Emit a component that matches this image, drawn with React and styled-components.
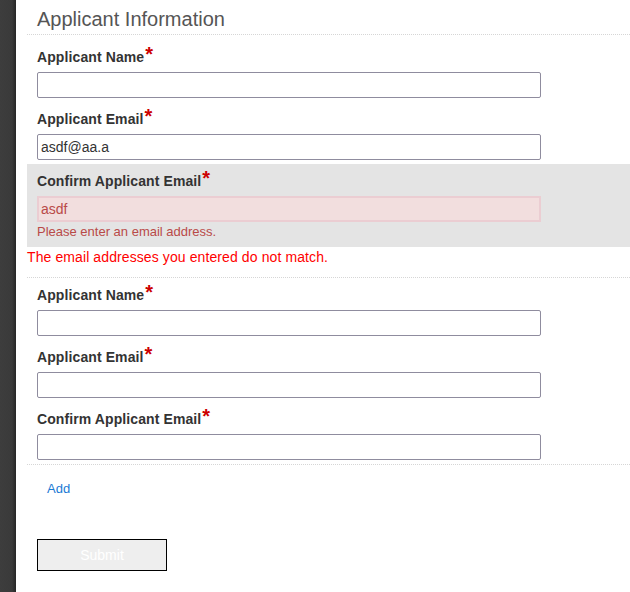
import React, { useState } from 'react';
import styled, { createGlobalStyle } from 'styled-components';

const GlobalStyle = createGlobalStyle`
html, body {
  margin: 0;
  padding: 0;
  background: #fff;
}
body {
  font-family: "Liberation Sans", Arial, sans-serif;
}
`;

const Page = styled.div`
display: flex;
min-height: 100vh;
`;

const SideBar = styled.div`
width: 16px;
flex-shrink: 0;
background: linear-gradient(to right, #3d3d3d 0, #3a3a3a 12px, #262626 16px);
`;

const Main = styled.div`
flex: 1;
padding-left: 11px;
`;

const Title = styled.h2`
margin: 0;
padding: 7px 10px 3px;
font-size: 20px;
line-height: 24px;
font-weight: normal;
color: #555;
border-bottom: 1px dotted #d6d6d6;
`;

const Group = styled.div`
padding-top: ${(p) => p.$top || 0}px;
border-bottom: 1px dotted #d6d6d6;
`;

const Field = styled.div`
padding: 7px 10px ${(p) => (p.$error ? 7 : 4)}px;
background: ${(p) => (p.$error ? '#e4e4e4' : 'transparent')};
`;

const Label = styled.label`
display: block;
font-size: 14px;
line-height: 20px;
font-weight: bold;
letter-spacing: 0.1px;
color: #333;
margin-bottom: 5px;
`;

const Star = styled.span`
color: #cc0000;
font-size: 20px;
line-height: 0;
vertical-align: 1px;
margin-left: 1px;
`;

const Input = styled.input`
display: block;
box-sizing: border-box;
width: 504px;
height: 26px;
margin: 0;
padding: 0 ${(p) => (p.$error ? 2 : 3)}px;
font-family: "Liberation Sans", Arial, sans-serif;
font-size: 14px;
color: ${(p) => (p.$error ? '#b94a48' : '#333')};
background: ${(p) => (p.$error ? '#f2dede' : '#fff')};
border: ${(p) => (p.$error ? '2px solid #ebcdd2' : '1px solid #8f8c9e')};
border-radius: ${(p) => (p.$error ? 0 : 2)}px;
outline: none;
`;

const FieldError = styled.div`
margin-top: 2px;
font-size: 13px;
line-height: 16px;
color: #b94a48;
`;

const Mismatch = styled.div`
font-size: 14px;
line-height: 20px;
letter-spacing: 0.1px;
color: #ff0000;
margin-bottom: 10px;
`;

const AddLink = styled.a`
display: inline-block;
margin: 14px 0 0 20px;
font-size: 13px;
line-height: 20px;
color: #1a7ad4;
text-decoration: none;
cursor: pointer;
`;

const Actions = styled.div`
padding: 40px 10px 0;
`;

const SubmitButton = styled.button`
width: 130px;
height: 32px;
background: #eeeeee;
border: 1px solid #000;
color: #fff;
font-family: "Liberation Sans", Arial, sans-serif;
font-size: 14px;
padding: 0;
`;

const FormField = ({ label, value, error, onChange }) => (
  <Field $error={!!error}>
    <Label>
      {label}
      <Star>*</Star>
    </Label>
    <Input
      type="text"
      $error={!!error}
      value={value}
      onChange={(e) => onChange(e.target.value)}
    />
    {error && <FieldError>{error}</FieldError>}
  </Field>
);

const App = () => {
  const [applicants, setApplicants] = useState([
    { name: '', email: 'asdf@aa.a', confirm: 'asdf' },
    { name: '', email: '', confirm: '' },
  ]);

  const update = (i, key, val) => {
    setApplicants(applicants.map((a, j) => (j === i ? { ...a, [key]: val } : a)));
  };

  const first = applicants[0];
  const second = applicants[1];

  return (
    <Page>
      <GlobalStyle />
      <SideBar />
      <Main>
        <Title>Applicant Information</Title>
        <Group $top={5}>
          <FormField label="Applicant Name" value={first.name} onChange={(v) => update(0, 'name', v)} />
          <FormField label="Applicant Email" value={first.email} onChange={(v) => update(0, 'email', v)} />
          <FormField
            label="Confirm Applicant Email"
            value={first.confirm}
            error="Please enter an email address."
            onChange={(v) => update(0, 'confirm', v)}
          />
          <Mismatch>The email addresses you entered do not match.</Mismatch>
        </Group>
        <Group>
          <FormField label="Applicant Name" value={second.name} onChange={(v) => update(1, 'name', v)} />
          <FormField label="Applicant Email" value={second.email} onChange={(v) => update(1, 'email', v)} />
          <FormField label="Confirm Applicant Email" value={second.confirm} onChange={(v) => update(1, 'confirm', v)} />
        </Group>
        <AddLink>Add</AddLink>
        <Actions>
          <SubmitButton>Submit</SubmitButton>
        </Actions>
      </Main>
    </Page>
  );
};

export default App;
